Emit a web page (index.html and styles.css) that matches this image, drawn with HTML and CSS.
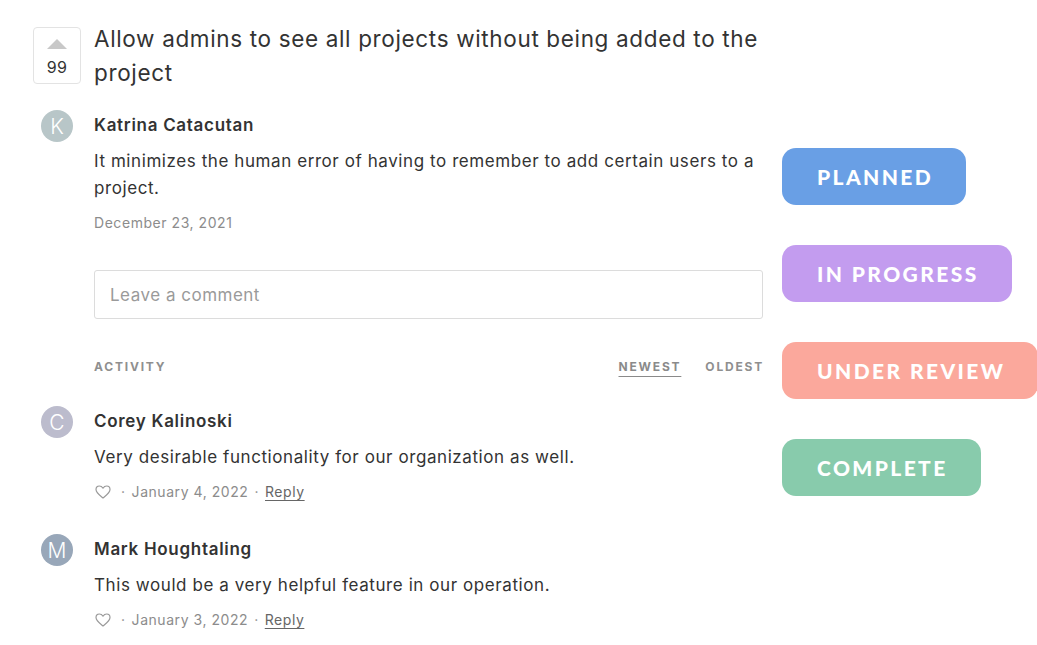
FILE: index.html
```html
<!DOCTYPE html>
<html>
<head>
<meta charset="utf-8">
<link rel="stylesheet" href="styles.css">
</head>
<body>
<div class="page">
  <main class="post">
    <div class="head">
      <div class="vote">
        <span class="arrow"></span>
        <span class="count">99</span>
      </div>
      <h1 class="title">Allow admins to see all projects without being added to the project</h1>
    </div>

    <div class="entry">
      <div class="avatar av-k">K</div>
      <div class="content">
        <div class="name">Katrina Catacutan</div>
        <p class="text">It minimizes the human error of having to remember to add certain users to a project.</p>
        <div class="date">December 23, 2021</div>
      </div>
    </div>

    <div class="comment-box">Leave a comment</div>

    <div class="activity">
      <span class="label">ACTIVITY</span>
      <span class="sorts"><span class="sort active">NEWEST</span><span class="sort">OLDEST</span></span>
    </div>

    <div class="entry reply">
      <div class="avatar av-c">C</div>
      <div class="content">
        <div class="name">Corey Kalinoski</div>
        <p class="text">Very desirable functionality for our organization as well.</p>
        <div class="meta">
          <svg class="heart" viewBox="0 0 16 14" width="16" height="14"><path d="M8 13 C5 10.5 1 7.6 1 4.4 C1 2.4 2.5 1 4.3 1 C5.7 1 7.2 1.9 8 3.2 C8.8 1.9 10.3 1 11.7 1 C13.5 1 15 2.4 15 4.4 C15 7.6 11 10.5 8 13 Z" fill="none" stroke="#9a9a9a" stroke-width="1.2" stroke-linejoin="round"/></svg>
          <span class="dot">·</span><span>January 4, 2022</span><span class="dot">·</span><a class="rep">Reply</a>
        </div>
      </div>
    </div>

    <div class="entry reply">
      <div class="avatar av-m">M</div>
      <div class="content">
        <div class="name">Mark Houghtaling</div>
        <p class="text">This would be a very helpful feature in our operation.</p>
        <div class="meta">
          <svg class="heart" viewBox="0 0 16 14" width="16" height="14"><path d="M8 13 C5 10.5 1 7.6 1 4.4 C1 2.4 2.5 1 4.3 1 C5.7 1 7.2 1.9 8 3.2 C8.8 1.9 10.3 1 11.7 1 C13.5 1 15 2.4 15 4.4 C15 7.6 11 10.5 8 13 Z" fill="none" stroke="#9a9a9a" stroke-width="1.2" stroke-linejoin="round"/></svg>
          <span class="dot">·</span><span>January 3, 2022</span><span class="dot">·</span><a class="rep">Reply</a>
        </div>
      </div>
    </div>
  </main>

  <aside class="statuses">
    <div class="pill planned">PLANNED</div>
    <div class="pill progress">IN PROGRESS</div>
    <div class="pill review">UNDER REVIEW</div>
    <div class="pill complete">COMPLETE</div>
  </aside>
</div>
</body>
</html>
```
FILE: styles.css
```css
* { box-sizing: border-box; }
html, body { margin: 0; padding: 0; background: #fff; }
body {
  font-family: "Inter", "Liberation Sans", sans-serif;
  color: #333;
  width: 1037px;
  height: 645px;
  overflow: hidden;
}
.page {
  display: flex;
  padding: 27px 0 0 33px;
}
.post {
  width: 730px;
  flex: none;
}
.head {
  display: flex;
  align-items: flex-start;
}
.vote {
  width: 48px;
  height: 57px;
  border: 1px solid #e3e3e3;
  border-radius: 4px;
  display: flex;
  flex-direction: column;
  align-items: center;
  padding-top: 11px;
  flex: none;
}
.arrow {
  width: 0; height: 0;
  border-left: 10px solid transparent;
  border-right: 10px solid transparent;
  border-bottom: 10px solid #c8c8c8;
}
.count {
  font-size: 16px;
  color: #333;
  margin-top: 8px;
  line-height: 20px;
  letter-spacing: 0.4px;
}
.title {
  margin: -5px 0 0 13px;
  font-size: 22.5px;
  font-weight: 400;
  line-height: 34px;
  color: #333;
  width: 680px;
  letter-spacing: 0.65px;
}
.entry {
  display: flex;
  margin-top: 20px;
}
.avatar {
  width: 32px; height: 32px;
  border-radius: 50%;
  flex: none;
  margin: 0 0 0 8px;
  color: #fff;
  font-size: 21px;
  display: flex;
  align-items: center;
  justify-content: center;
  font-weight: 300;
}
.av-k { background: #b8c6c8; }
.av-c { background: #bcbccd; }
.av-m { background: #98a7b9; }
.content {
  margin-left: 21px;
  width: 669px;
  padding-top: 4px;
}
.name {
  font-size: 17px;
  font-weight: 600;
  line-height: 22px;
  color: #333;
  letter-spacing: 0.7px;
}
.text {
  margin: 12px 0 0 0;
  font-size: 17px;
  line-height: 27px;
  color: #333;
  padding-right: 4px;
  letter-spacing: 0.58px;
}
.date {
  margin-top: 11px;
  font-size: 14px;
  color: #8c8c8c;
  line-height: 20px;
  letter-spacing: 0.55px;
}
.comment-box {
  margin: 37px 0 0 61px;
  width: 669px;
  height: 49px;
  border: 1px solid #dcdcdc;
  border-radius: 3px;
  font-size: 17px;
  color: #9a9a9a;
  padding: 13px 15px;
  line-height: 22px;
  letter-spacing: 0.5px;
}
.activity {
  margin: 40px 0 0 61px;
  width: 669px;
  display: flex;
  justify-content: space-between;
  font-size: 12px;
  font-weight: 700;
  letter-spacing: 1.8px;
  color: #8f8f8f;
  line-height: 16px;
}
.sorts { display: flex; gap: 24px; margin-right: -1px; }
.sort.active {
  color: #8a8a8a;
  text-decoration: underline;
  text-underline-offset: 5px;
  text-decoration-thickness: 1px;
}
.entry.reply { margin-top: 31px; }
.entry.reply + .entry.reply { margin-top: 32px; }
.entry.reply .text { margin-top: 12px; }
.meta {
  margin-top: 11px;
  display: flex;
  align-items: center;
  font-size: 14px;
  color: #8c8c8c;
  line-height: 20px;
  letter-spacing: 0.55px;
}
.heart { margin: 0 4px 0 1px; }
.dot { margin: 0 6px; }
.rep {
  color: #666;
  text-decoration: underline;
  text-underline-offset: 3px;
}
.statuses {
  display: flex;
  flex-direction: column;
  align-items: flex-start;
  gap: 40px;
  margin-left: 19px;
  padding-top: 121px;
}
.pill {
  height: 57px;
  border-radius: 14px;
  color: #fff;
  font-family: "Lato", "Liberation Sans", sans-serif;
  font-weight: 900;
  font-size: 21px;
  letter-spacing: 2.4px;
  display: flex;
  align-items: center;
  padding: 0 33px 0 35px;
  white-space: nowrap;
}
.planned { background: #699fe5; }
.progress { background: #c39cef; }
.review { background: #fba89c; }
.complete { background: #88cbac; }
```
